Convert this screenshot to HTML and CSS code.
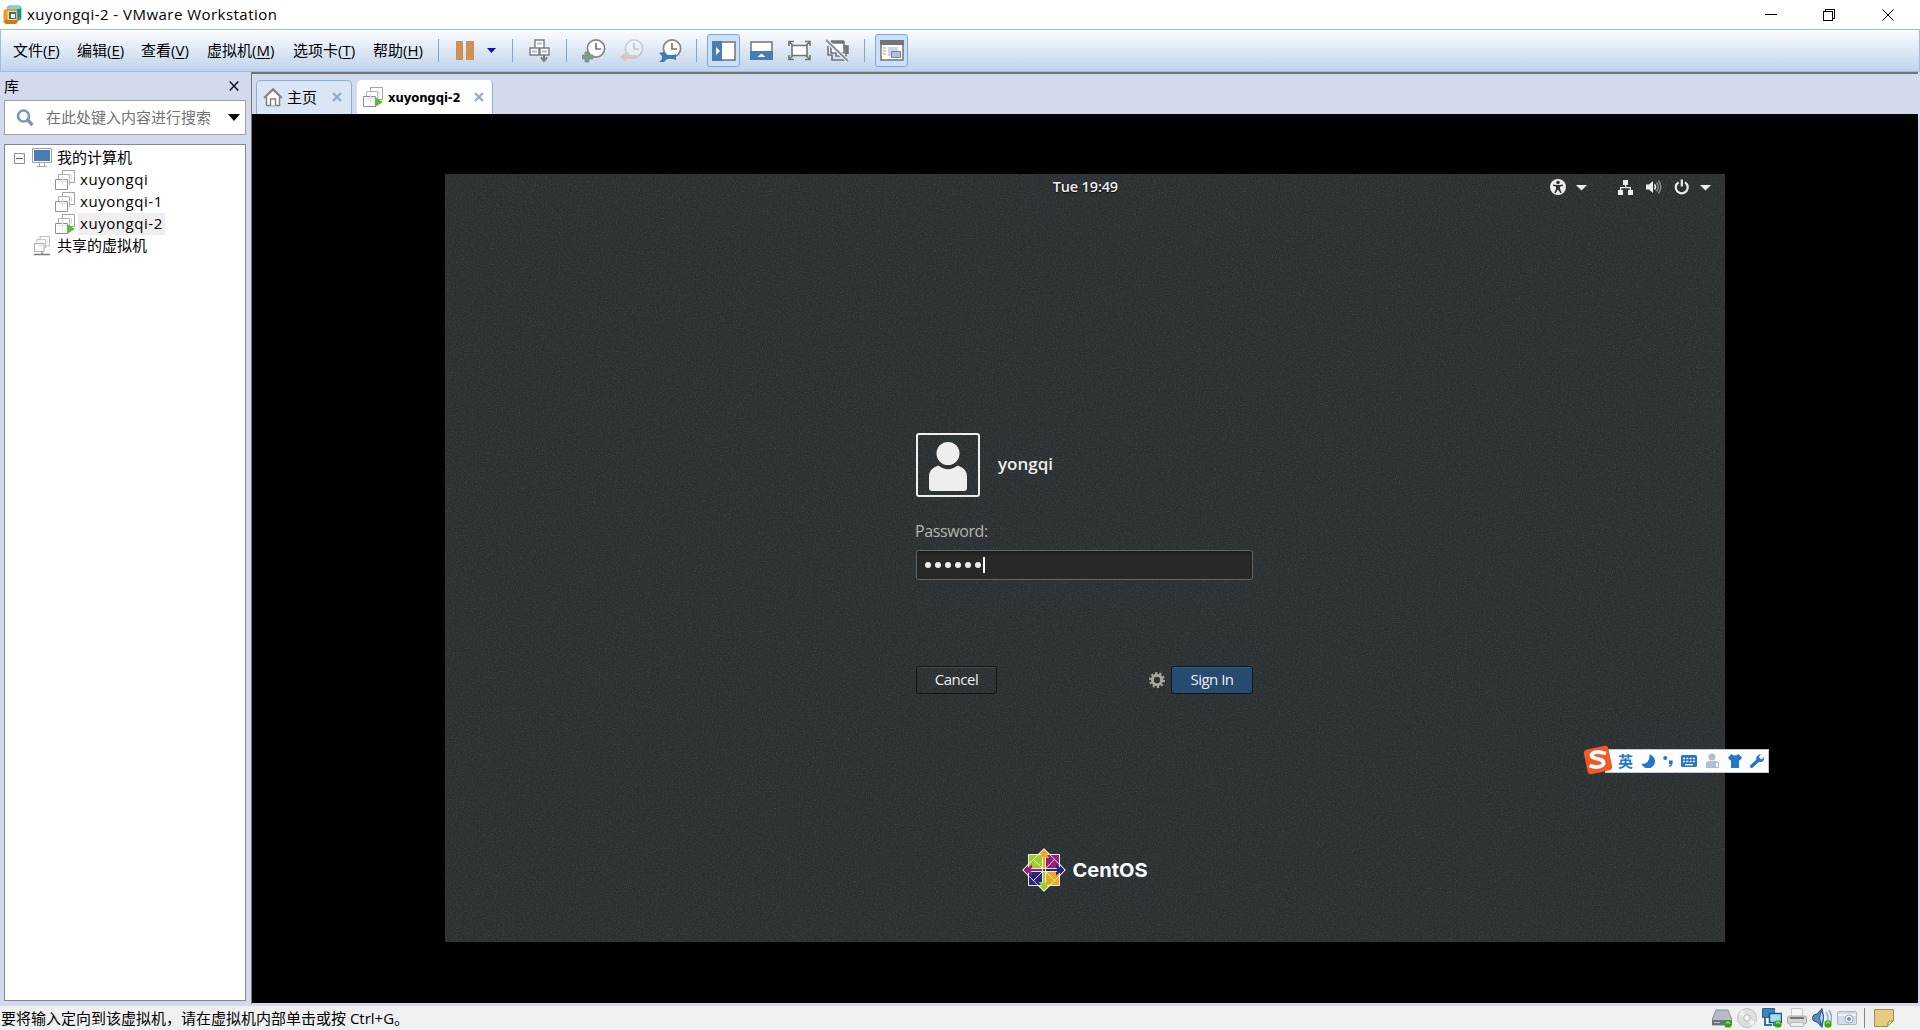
FILE: index.html
```html
<!DOCTYPE html>
<html lang="zh-CN">
<head>
  <meta charset="UTF-8">
  <title>xuyongqi-2 - VMware Workstation</title>
  <link rel="stylesheet" href="styles.css">
</head>
<body>
  <!-- shared shapes -->
  <svg class="defs" width="0" height="0">
    <symbol id="vm" viewBox="0 0 20 20">
      <path d="M7.500 12.500V.5h12v12h-12z" fill="#fff" stroke="#a3a3a3"/>
      <path d="M3.500 15V4.500h11V15" fill="#fff" stroke="#b0b0b0"/>
      <path d="M.5 9.500h12v10H.5z" fill="#fff" stroke="#909090"/>
      <path d="M7.500 6v9M4 11.500h8M14 4.500h2.500v5H14" fill="none" stroke="#d3e0ee"/>
    </symbol>
    <symbol id="clock" viewBox="0 0 24 24">
      <circle cx="14" cy="9.500" r="8.600" fill="#fff" stroke="#858585" stroke-width="1.700"/>
      <path d="M14 4v6h5" fill="none" stroke="#777" stroke-width="1.700"/>
    </symbol>
    <symbol id="dot" viewBox="0 0 8 8">
      <rect x=".5" y=".5" width="7" height="7" rx="2.500" fill="#36a314"/>
      <path d="M2 3.500L4 2l2 1.500" fill="none" stroke="#8ade5c" stroke-width="1.500"/>
    </symbol>
  </svg>

  <header class="titlebar">
    <svg class="app-icon" width="19" height="20" viewBox="0 0 19 20">
      <rect x="4" y=".5" width="14.500" height="15" rx="3" fill="#3caec8"/>
      <path d="M4 4l3-3.500h9l2 1-2 3H7z" fill="#7fd3df"/>
      <rect x=".5" y="4" width="14.500" height="15" rx="3" fill="#ee9c20"/>
      <path d="M1 16l4-3h9v4l-2 2H3z" fill="#d17a1c"/>
      <path d="M14 4l4 0v9l-3 3z" fill="#2389a5"/>
      <rect x="4.500" y="6" width="9" height="9" fill="#f7d790"/>
      <rect x="6" y="7" width="7" height="7" fill="#28798e"/>
      <rect x="8" y="9" width="4" height="4" fill="#fff"/>
    </svg>
    <span class="title">xuyongqi-2 - VMware Workstation</span>
    <svg class="window-buttons" width="136" height="14" viewBox="0 0 136 14" fill="none" stroke="#000" shape-rendering="crispEdges">
      <path d="M0 6.500h12M58.500 3.500h9v9h-9zM60.500 3V1.500h9v9H68"/>
      <path d="M117.500 1.500l11 11M128.500 1.500l-11 11" shape-rendering="auto"/>
    </svg>
  </header>

  <nav class="toolbar">
    <div class="menu">
      <span>文件(<u>F</u>)</span>
      <span>编辑(<u>E</u>)</span>
      <span class="view">查看(<u>V</u>)</span>
      <span class="wide">虚拟机(<u>M</u>)</span>
      <span class="tab-menu">选项卡(<u>T</u>)</span>
      <span>帮助(<u>H</u>)</span>
    </div>
    <i class="sep"></i>
    <svg width="22" height="24"><path d="M2.500 2.500h6v18h-6zM12.500 2.500h7v18h-7z" fill="#d3914d" stroke="#b99166"/></svg>
    <svg class="drop" width="9" height="24"><path d="M0 9h9L4.500 14z" fill="#0a13bd"/></svg>
    <i class="sep"></i>
    <svg width="24" height="24" fill="#fff" stroke="#7d7d7d" stroke-width="1.400">
      <path d="M7 1h9v8H7zM2 9h9v7H2zM12 9h9v7h-9z"/>
      <path d="M9 4.500h5M4 12.500h5M14 12.500h5" stroke="#aac2e2" stroke-width="2"/>
      <path d="M16 16v6M13 18.500l3 3.500 3-3.500" fill="none" stroke-width="2"/>
    </svg>
    <i class="sep"></i>
    <svg width="24" height="24"><use href="#clock" width="24" height="24"/><path d="M3 13h4v3h4v4H7v3H3v-3H0v-4h3z" fill="#7f9e8a" stroke="#6f8f7c" stroke-width=".7"/></svg>
    <svg width="24" height="24"><use href="#clock" width="24" height="24" opacity=".3"/><path d="M0 18l6-5v3h11v4H6v3z" fill="#d9c8b9"/></svg>
    <svg width="24" height="24"><use href="#clock" width="24" height="24"/><path d="M1 14l5-1 3 3h6l3-1v6l-3-1H9l-3 3H1l3-3v-3z" fill="#437bb4"/></svg>
    <i class="sep"></i>
    <span class="pressed"><svg width="24" height="24"><path d="M1 3h22v18H1z" fill="#fff" stroke="#737373" stroke-width="1.500"/><path d="M0 2h10v20H0z" fill="#477db4"/><path d="M4 8l4 4-4 4z" fill="#fff"/></svg></span>
    <svg width="24" height="24"><path d="M1 3h21v17H1z" fill="#fff" stroke="#737373" stroke-width="1.500"/><path d="M0 12h23v9H0z" fill="#477db4"/><path d="M7.500 18l4-3.500 4 3.500z" fill="#fff"/></svg>
    <svg width="24" height="24" fill="none" stroke="#747474" stroke-width="1.600"><path d="M4 6.500h15v10H4z" fill="#fff"/><path d="M1 7V2.500h5M1 2.500l4 4M17 2.500h5V7M22 2.500l-4 4M1 16v4.500h5M1 20.500l4-4M17 20.500h5V16M22 20.500l-4-4"/></svg>
    <svg width="24" height="24" fill="#fff" stroke="#747474" stroke-width="1.600"><path d="M10 7h10v10H10z"/><path d="M5 3h13v11H5z"/><path d="M5 3h13M18 8h3v7" fill="none" stroke-width="3.500"/><path d="M2 7v9h4v5h13v-4" fill="none"/><path d="M0 1l22 21" stroke="#eef3fa" stroke-width="4"/><path d="M0 1l22 21" stroke="#858c93" stroke-width="1.800"/></svg>
    <i class="sep"></i>
    <span class="pressed"><svg width="24" height="24"><path d="M1 2h22v19H1z" fill="#fff" stroke="#747474" stroke-width="1.500"/><path d="M0 1h24v5H0z" fill="#747474"/><path d="M3 9h3m-3 3h3m-3 3h3" stroke="#e3b66c" stroke-width="1.500"/><path d="M8 8h10v9H8z" fill="#c9d6ec"/><path d="M11.500 12.500h9v6h-9z" fill="#aebfe0" stroke="#70819f"/></svg></span>
  </nav>

  <div class="workspace">
    <aside class="library">
      <div class="library-head"><span>库</span><svg width="10" height="10"><path d="M.7.5l8.600 9M9.300.5l-8.600 9" stroke="#000" stroke-width="1.300"/></svg></div>
      <div class="search">
        <svg width="19" height="18"><circle cx="7.500" cy="7" r="5.500" fill="none" stroke="#7d94ba" stroke-width="2.600"/><path d="M11.500 11l5 5" stroke="#7d94ba" stroke-width="3.200"/></svg>
        <span>在此处键入内容进行搜索</span>
        <svg class="search-arrow" width="12" height="7"><path d="M0 0h12L6 7z"/></svg>
      </div>
      <div class="tree">
        <div class="row root">
          <svg width="11" height="11"><path d="M.5.5h10v10H.5z" fill="#f8f8f8" stroke="#919191"/><path d="M2 5.500h7" stroke="#4564a6"/></svg>
          <svg class="monitor" width="20" height="20"><path d="M.5.500h19v14H.5z" fill="#fff" stroke="#a0a0a0"/><path d="M2 2h16v11H2z" fill="#477db4"/><path d="M7.500 15v3M12.500 15v3M5 18.500h10" stroke="#aaa"/></svg>
          <span>我的计算机</span>
        </div>
        <div class="row child"><svg width="20" height="20"><use href="#vm"/></svg><span>xuyongqi</span></div>
        <div class="row child"><svg width="20" height="20"><use href="#vm"/></svg><span>xuyongqi-1</span></div>
        <div class="row child selected"><svg width="20" height="20"><use href="#vm"/><path d="M12 10l8 5-8 5z" fill="#57bd3e"/></svg><span>xuyongqi-2</span></div>
        <div class="row shared"><svg width="20" height="20"><use href="#vm" x="2" width="16" height="16"/><path d="M2 18.500h16M10 16v3" stroke="#777" stroke-width="1.300"/></svg><span>共享的虚拟机</span></div>
      </div>
    </aside>

    <main class="content">
      <div class="tabs">
        <div class="tab home"><svg width="20" height="20" fill="#fff" stroke="#838383" stroke-width="1.500"><path d="M3.500 9v9.500h13V9L10 3z"/><path d="M1 11l9-9 9 9" fill="none" stroke-width="1.800"/><path d="M7.500 18.500V12h5v6.500"/></svg><span>主页</span><svg class="close" width="10" height="10"><path d="M1 1l8 8M9 1L1 9"/></svg></div>
        <div class="tab active"><svg width="20" height="20"><use href="#vm"/><path d="M12 10l8 5-8 5z" fill="#57bd3e"/></svg><span>xuyongqi-2</span><svg class="close" width="10" height="10"><path d="M1 1l8 8M9 1L1 9"/></svg></div>
      </div>
      <div class="console">
        <div class="screen">
          <svg class="noise" width="1280" height="768">
            <filter id="grain"><feTurbulence type="fractalNoise" baseFrequency=".7" numOctaves="2" seed="4"/><feColorMatrix values="0 0 0 0 1  0 0 0 0 1  0 0 0 0 1  .9 0 0 0 -.37"/></filter>
            <rect width="1280" height="768" filter="url(#grain)" opacity=".2"/>
          </svg>
          <div class="gnome-bar">
            <span class="time">Tue 19:49</span>
            <svg class="indicators" width="162" height="18" fill="#eeeeec">
              <circle cx="8" cy="9" r="8"/><circle cx="8" cy="4.500" r="1.800" fill="#2e3436"/><path d="M3 6.500l3.500.5h3l3.500-.5v1.300L10 8.700v2l1.700 4-1.200.5L8 11.500l-2.500 3.700-1.200-.5 1.700-4v-2L3 7.800z" fill="#2e3436"/>
              <path d="M26 7h11l-5.500 5.500z"/>
              <path d="M73 2h5v5h-5zM68 12h5v5h-5zM78 12h5v5h-5zM75 7h1.300v2H81v3h-1.300v-1.700h-8.400V12H70V9h5z"/>
              <path d="M96 6.500h3L103 3v12l-4-3.500h-3z"/><path d="M104.500 6.500q2 2.500 0 5" fill="none" stroke="#eee" stroke-width="1.500"/><path d="M106.500 4.500q3.500 4.500 0 9M108.500 2.500q4.500 6.500 0 13" fill="none" stroke="#858989" stroke-width="1.500"/>
              <path d="M128.500 4.300a6 6 0 1 0 6.500 0M131.800 1.500v7" fill="none" stroke="#eee" stroke-width="2.200"/>
              <path d="M150 7h11l-5.500 5.500z"/>
            </svg>
          </div>
          <div class="login">
            <div class="user">
              <div class="avatar"><svg width="60" height="60" fill="#eeeeec"><circle cx="30" cy="18.500" r="11.500"/><path d="M20.500 30.500Q30 38 39.500 30.500q9.500 3 9.500 11V53q0 3-3 3H14q-3 0-3-3V41.500q0-8 9.500-11z"/></svg></div>
              <span>yongqi</span>
            </div>
            <div class="password-label">Password:</div>
            <div class="password"><i></i><i></i><i></i><i></i><i></i><i></i><b></b></div>
            <div class="actions">
              <span class="button cancel">Cancel</span>
              <svg class="gear" width="16" height="16"><circle cx="8" cy="8" r="4.700" fill="none" stroke="#a6a799" stroke-width="3"/><circle cx="8" cy="8" r="6.900" fill="none" stroke="#a6a799" stroke-width="2.200" stroke-dasharray="2.200 2.135"/></svg>
              <span class="button sign-in">Sign In</span>
            </div>
          </div>
          <svg class="centos" width="128" height="44">
            <g stroke="#fff" stroke-width=".9">
              <path d="M22 .8L31 9.500H13z" fill="#efa724"/><path d="M43.200 22L34.500 31V13z" fill="#262577"/>
              <path d="M22 43.200L13 34.500h18z" fill="#9ccd2a"/><path d="M.8 22l8.700-9v18z" fill="#932279"/>
              <path d="M6.500 6.500H21V21H6.500z" fill="#9ccd2a"/><path d="M23 6.500h14.500V21H23z" fill="#932279"/>
              <path d="M6.500 23H21v14.500H6.500z" fill="#262577"/><path d="M23 23h14.500v14.500H23z" fill="#efa724"/>
              <path d="M20.500 20V10h-4L22 3l5.500 7h-4v10z" fill="#efa724" stroke="none"/><path d="M24 20.500h10v-4l7 5.500-7 5.500v-4H24z" fill="#262577" stroke="none"/>
              <path d="M20.500 24v10h-4l5.500 7 5.500-7h-4V24z" fill="#9ccd2a" stroke="none"/><path d="M20 20.500H10v-4L3 22l7 5.500v-4h10z" fill="#932279" stroke="none"/>
              <path d="M22 .8L43.200 22 22 43.200.8 22zM11 11l9.500 9.500M33 11l-9.500 9.500M11 33l9.500-9.500M33 33l-9.500-9.500M20.500 9v11M23.500 9v11M20.500 24v11M23.500 24v11M9 20.500h11M9 23.500h11M24 20.500h11M24 23.500h11" fill="none" stroke-width=".8"/>
              <path d="M20.500 20.500h3v3h-3z" fill="#30383a"/>
            </g>
            <text x="50.500" y="28.500" textLength="75" lengthAdjust="spacingAndGlyphs">CentOS</text>
          </svg>
        </div>
      </div>
    </main>
  </div>

  <footer class="status">
    <span>要将输入定向到该虚拟机，请在虚拟机内部单击或按 Ctrl+G。</span>
    <div class="devices">
      <svg width="20" height="20"><path d="M4 2h12l4 10v5H0v-5z" fill="#b6bdc6" stroke="#858d97"/><path d="M0 12h20v5H0z" fill="#69727e"/><path d="M2 14.500h6" stroke="#bdc7d1"/><use href="#dot" x="12" y="12" width="8" height="8"/></svg>
      <svg width="20" height="20"><circle cx="10" cy="10" r="9.500" fill="#dedede" stroke="#c4c4c4"/><path d="M10 10L5 2 2 6zM10 10l5 8 3-4z" fill="#f3f3f3"/><circle cx="10" cy="10" r="3.300" fill="#eee" stroke="#bbb"/><circle cx="10" cy="10" r="1" fill="#fff"/></svg>
      <svg width="20" height="20"><path d="M.5.500h12v9H.5z" fill="#3f83b8" stroke="#28618f"/><path d="M7.500 5.500h12v9h-12z" fill="#a9daf7" stroke="#19588c" stroke-width="1.500"/><path d="M3 10v7h7M12 15v3" fill="none" stroke="#3c7298" stroke-width="2"/><use href="#dot" x="12" y="12" width="8" height="8"/></svg>
      <svg width="20" height="20"><path d="M4.500.500h11v9h-11z" fill="#f6f6f6" stroke="#c8c8c8"/><rect x=".5" y="8" width="19" height="8" rx="2" fill="#d2d2d2" stroke="#aaa"/><path d="M3 10h14" stroke="#777" stroke-width="2"/><path d="M3.500 14.500h13v4h-13z" fill="#eee" stroke="#bbb"/></svg>
      <svg width="20" height="20"><path d="M0 10Q1 6 5 6l5-5.500q3 9 0 19L5 14Q1 14 0 10z" fill="#558db9" stroke="#285b83"/><path d="M9 3q5 6 0 14Q6 10 9 3z" fill="#b4d2e9" stroke="#265c8c"/><path d="M14 4q4 6 0 12M17 2q5 8 0 14" fill="none" stroke="#80b2da" stroke-width="1.500"/><use href="#dot" x="12" y="12" width="8" height="8"/></svg>
      <svg width="20" height="20"><rect x=".5" y="3.500" width="19" height="13" rx="1" fill="#d1dce4" stroke="#aab6c0"/><path d="M1 7h18" stroke="#edf3f7" stroke-width="2"/><circle cx="12" cy="11" r="4" fill="#f1f5f8" stroke="#9cabb7"/><circle cx="12" cy="11" r="2" fill="#6d95b5"/></svg>
      <i></i>
      <svg width="20" height="20"><path d="M.5 1.500h19v11l-6 6H.5z" fill="#e6cc82" stroke="#a18b51"/><path d="M13.500 18.500l1-5 5-1z" fill="#f6e6b4" stroke="#a18b51"/></svg>
    </div>
  </footer>

  <div class="ime">
    <svg class="ime-logo" width="30" height="30"><rect x="2.500" y="2.500" width="25" height="25" rx="4" fill="#f15a24" transform="rotate(-12 15 15)"/><path d="M23 8.500Q10 5 8.500 10c-.5 5 13.500 2.500 12 8.500-1.500 4.500-9 4-14 2" fill="none" stroke="#fff" stroke-width="3.800"/></svg>
    <div class="ime-tools">
      <span>英</span>
      <svg width="14" height="14"><path d="M8.500.5a7 7 0 1 1-8 9.500Q9 10 8.500.5z"/></svg>
      <svg width="10" height="14"><circle cx="2.200" cy="4" r="2"/><path d="M6 6.500h3.500Q10.500 11 6.500 13l-.7-1.200Q7.500 11 7.300 10H6z"/></svg>
      <svg width="16" height="14"><rect y="1" width="16" height="12" rx="1.500"/><path d="M2 4.500h12M2 7.500h12" stroke="#fff" stroke-width="1.700" stroke-dasharray="2 1.300"/><path d="M4 10.700h8" stroke="#fff" stroke-width="1.400"/></svg>
      <svg width="14" height="16" class="muted"><circle cx="6" cy="4" r="3.500"/><path d="M0 15v-4q0-3 3-3h7q2 0 2 3v4z"/><path d="M9.500 9.500h3v5h-3z" fill="#fff" stroke="#abb8cd"/></svg>
      <svg width="14" height="14"><path d="M3.500 0Q7 3 10.500 0L14 3.500l-2 3-1-.8V14H3V5.700l-1 .8-2-3z"/></svg>
      <svg width="14" height="14"><path d="M1.700 12.300L9 5.500" stroke="#2376c8" stroke-width="3.400" stroke-linecap="round"/><path d="M11 .3L9 2.500 9.500 5l2.300.2L14 3q.5 3-1.500 4.500-2 1.200-4 0Q5.500 6 6.500 3 8 0 11 .3z"/></svg>
    </div>
  </div>
</body>
</html>
```
FILE: styles.css
```css
* {
  box-sizing: border-box;
}

body {
  margin: 0;
  height: 1030px;
  display: flex;
  flex-direction: column;
  overflow: hidden;
  position: relative;
  background: #fff;
  color: #000;
  font: 15px/22px "Open Sans", "Noto Sans CJK SC", sans-serif;
  white-space: nowrap;
}

svg {
  display: block;
  flex: none;
}

.defs {
  position: absolute;
}

/* title and menu */
.titlebar {
  height: 29px;
  flex: none;
  display: flex;
  align-items: center;
  padding-left: 3px;
}

.title {
  margin-left: 5px;
  padding-bottom: 2px;
  letter-spacing: .47px;
}

.window-buttons {
  margin-left: auto;
  margin-right: 19px;
}

.toolbar {
  height: 43px;
  flex: none;
  display: flex;
  align-items: center;
  gap: 14px;
  border: 1px solid #9ebddf;
  background: linear-gradient(#fbfdfe, #c0d3eb);
}

.menu {
  width: 423px;
  padding: 0 0 2px 12px;
  display: flex;
}

.menu span {
  width: 64px;
  flex: none;
}

.menu .view {
  width: 66px;
}

.menu .wide {
  width: 86px;
}

.menu .tab-menu {
  width: 80px;
}

.menu u {
  text-underline-offset: 2px;
}

.sep {
  width: 1px;
  height: 23px;
  margin-right: 1px;
  background: #7da7d3;
}

.drop {
  margin-left: -3px;
  margin-right: 2px;
}

.pressed {
  width: 33px;
  height: 33px;
  margin: 0 -4px 0 -5px;
  padding: 4px;
  border: 1px solid #7da7d8;
  border-radius: 3px;
  background: #cbdff9;
}

.workspace {
  height: 934px;
  flex: none;
  display: flex;
  background: #d4daed;
}

/* library */
.library {
  width: 251px;
  height: 934px;
  padding: 0 5px 5px 4px;
  display: flex;
  flex-direction: column;
}

.library-head {
  height: 28px;
  display: flex;
  align-items: center;
  justify-content: space-between;
  padding-right: 7px;
}

.search {
  height: 35px;
  display: flex;
  align-items: center;
  border: 1px solid #a0a0a0;
  background: #fff;
  color: #727272;
  padding-left: 11px;
}

.search span {
  margin-left: 11px;
  padding-bottom: 2px;
}

.search-arrow {
  margin-left: auto;
  margin-right: 5px;
}

.tree {
  flex: 1;
  margin-top: 9px;
  padding-top: 2px;
  border: 1px solid #828790;
  background: #fff;
}

.row {
  height: 22px;
  display: flex;
  align-items: center;
}

.row span {
  line-height: 20px;
  padding-bottom: 2px;
}

.root {
  padding-left: 9px;
}

.monitor {
  margin-left: 7px;
  margin-right: 5px;
}

.child {
  padding-left: 50px;
}

.child span {
  margin-left: 3px;
  padding: 0 2px 2px;
  letter-spacing: .55px;
}

.selected span {
  background: #efefef;
}

.shared {
  padding-left: 27px;
}

.shared span {
  margin-left: 5px;
}

/* tabs and guest screen */
.content {
  width: 1667px;
  height: 932px;
  border-top: 2px solid #737373;
  border-left: 1px solid #737373;
}

.tabs {
  height: 40px;
  padding: 6px 0 0 4px;
  display: flex;
}

.tab {
  display: flex;
  align-items: center;
  padding-bottom: 2px;
  border: 1px solid #8bb0d0;
  border-bottom: 0;
  border-radius: 5px 5px 0 0;
}

.home {
  width: 96px;
  padding-left: 6px;
  background: #dae6f5;
}

.home span {
  margin-left: 4px;
  width: 45px;
}

.active {
  width: 136px;
  margin-left: 5px;
  padding-left: 5px;
  background: #fff;
  border-color: #fff #8bb0d0 #fff #fff;
  font: bold 13px/20px "DejaVu Sans Condensed", sans-serif;
}

.active span {
  margin-left: 5px;
  width: 86px;
  padding-top: 2px;
  letter-spacing: -.1px;
}

.close {
  stroke: #89adca;
  stroke-width: 2.2;
}

.console {
  height: 889px;
  padding: 60px 0 0 193px;
  background: #000;
}

.screen {
  position: relative;
  width: 1280px;
  height: 768px;
  background: #2b3133;
  color: #eeeeec;
  font-family: "Open Sans", sans-serif;
  overflow: hidden;
}

.noise {
  position: absolute;
  inset: 0;
}

.gnome-bar {
  position: relative;
  height: 26px;
  display: flex;
  align-items: center;
  justify-content: flex-end;
  padding-right: 13px;
  text-shadow: 0 1px 2px #000;
}

.time {
  margin-right: 432px;
  font-size: 14.5px;
  font-weight: 600;
  letter-spacing: -.15px;
}

.login {
  position: relative;
  width: 337px;
  margin: 233px 0 0 471px;
}

.user {
  display: flex;
  align-items: center;
  font-size: 17px;
  font-weight: 600;
}

.user span {
  padding-bottom: 2px;
}

.avatar {
  width: 64px;
  height: 64px;
  margin-right: 18px;
  border: 2px solid #eeeeec;
  border-radius: 3px;
}

.password-label {
  margin: 23px 0 0 -1px;
  height: 30px;
  font-size: 16px;
  letter-spacing: -.4px;
  color: #b3b5ac;
}

.password {
  height: 30px;
  padding-left: 8px;
  display: flex;
  align-items: center;
  gap: 4px;
  border: 1px solid #65675f;
  border-radius: 3px;
  background: #282828;
  box-shadow: inset 0 2px 3px #1b1b1b;
}

.password i {
  width: 6px;
  height: 6px;
  border-radius: 50%;
  background: #eeeeec;
}

.password b {
  width: 2px;
  height: 16px;
  margin-left: -2px;
  background: #fff;
}

.actions {
  margin-top: 86px;
  display: flex;
  align-items: center;
}

.button {
  height: 28px;
  border: 1px solid #111414;
  border-radius: 3px;
  text-align: center;
  line-height: 25px;
  font-size: 15px;
  letter-spacing: -.5px;
  box-shadow: inset 0 1px #454b4d;
}

.cancel {
  width: 81px;
}

.gear {
  margin: 0 6px 0 152px;
}

.sign-in {
  width: 82px;
  background: #264a70;
  box-shadow: inset 0 1px #365b80;
}

.centos {
  position: relative;
  margin: 154px 0 0 577px;
  fill: #fff;
  font: bold 19px Inter, sans-serif;
}

/* status */
.status {
  height: 24px;
  flex: none;
  display: flex;
  align-items: center;
  padding: 0 26px 0 1px;
  background: #f0f0f0;
}

.devices {
  margin-left: auto;
  display: flex;
  gap: 5px;
}

.devices i {
  width: 1px;
  height: 20px;
  margin: 0 4px 0 2px;
  background: #888;
}

/* input method bar floating over the window */
.ime {
  position: absolute;
  left: 1583px;
  top: 745px;
  width: 186px;
}

.ime-logo {
  position: absolute;
  left: 0;
  top: 0;
}

.ime-tools {
  height: 24px;
  margin: 4px 0 0 22px;
  padding: 0 4px 0 12px;
  display: flex;
  align-items: center;
  justify-content: space-between;
  background: #fdfdfe;
  border: 1px solid #b7cbdc;
  fill: #2376c8;
  color: #2376c8;
  font-weight: bold;
}

.ime .muted {
  fill: #b2bfd3;
}
```
